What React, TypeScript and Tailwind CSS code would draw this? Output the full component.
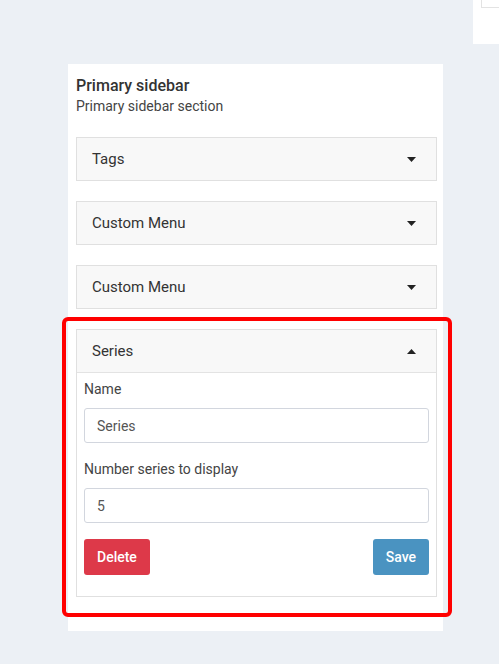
import type { ReactNode } from "react";

const collapsed = ["Tags", "Custom Menu", "Custom Menu"];

function Caret({ up = false }: { up?: boolean }) {
  return (
    <svg width="9" height="5" viewBox="0 0 9 5" aria-hidden className="text-[#222]">
      {up ? (
        <polygon points="0,5 9,5 4.5,0" fill="currentColor" />
      ) : (
        <polygon points="0,0 9,0 4.5,5" fill="currentColor" />
      )}
    </svg>
  );
}

function ItemHeader({ label, open = false }: { label: string; open?: boolean }) {
  return (
    <div className="flex h-[42px] items-center justify-between bg-[#f8f8f8] pl-[15px] pr-[20px] text-[15px] text-[#333]">
      <span>{label}</span>
      <Caret up={open} />
    </div>
  );
}

function Field({ label, value, children }: { label: string; value: string; children?: ReactNode }) {
  return (
    <div className="flex flex-col">
      <label className="text-[14px] leading-5 text-[#444]">{label}</label>
      <input
        readOnly
        value={value}
        className="mt-[9px] h-[35px] rounded-[3px] border border-[#d2d6de] bg-white px-3 text-[14px] text-[#555] outline-none"
      />
      {children}
    </div>
  );
}

export default function App() {
  return (
    <div className="relative min-h-[664px] bg-[#ecf0f5] font-['Roboto',sans-serif]">
      <div className="absolute right-0 top-0 h-[44px] w-[26px] bg-white">
        <div className="ml-[8px] h-[8px] border-b border-l border-[#e3e3e3]" />
      </div>

      <div className="flex pl-[68px] pt-[64px]">
        <aside className="flex h-[567px] w-[375px] flex-col bg-white pl-[8px] pr-[6px] pt-[12px]">
          <p className="text-[16px] font-medium leading-5 text-[#333]">Primary sidebar</p>
          <p className="text-[14px] leading-5 text-[#444]">Primary sidebar section</p>

          <div className="mt-[21px] flex flex-col gap-[20px]">
            {collapsed.map((label, i) => (
              <div key={i} className="border border-[#e0e0e0]">
                <ItemHeader label={label} />
              </div>
            ))}

            <div className="border border-[#e0e0e0]">
              <ItemHeader label="Series" open />
              <div className="flex flex-col gap-[16px] border-t border-[#e3e3e3] px-[7px] pb-[21px] pt-[6px]">
                <Field label="Name" value="Series" />
                <Field label="Number series to display" value="5" />
                <div className="flex justify-between">
                  <button className="h-[36px] rounded-[3px] bg-[#dd3949] px-[13px] text-[14px] font-medium text-white">
                    Delete
                  </button>
                  <button className="h-[36px] rounded-[3px] bg-[#4a93c1] px-[13px] text-[14px] font-medium text-white">
                    Save
                  </button>
                </div>
              </div>
            </div>
          </div>
        </aside>
      </div>

      <div className="pointer-events-none absolute left-[62px] top-[317px] h-[300px] w-[390px] rounded-[6px] border-4 border-[#ff0000]" />
    </div>
  );
}
